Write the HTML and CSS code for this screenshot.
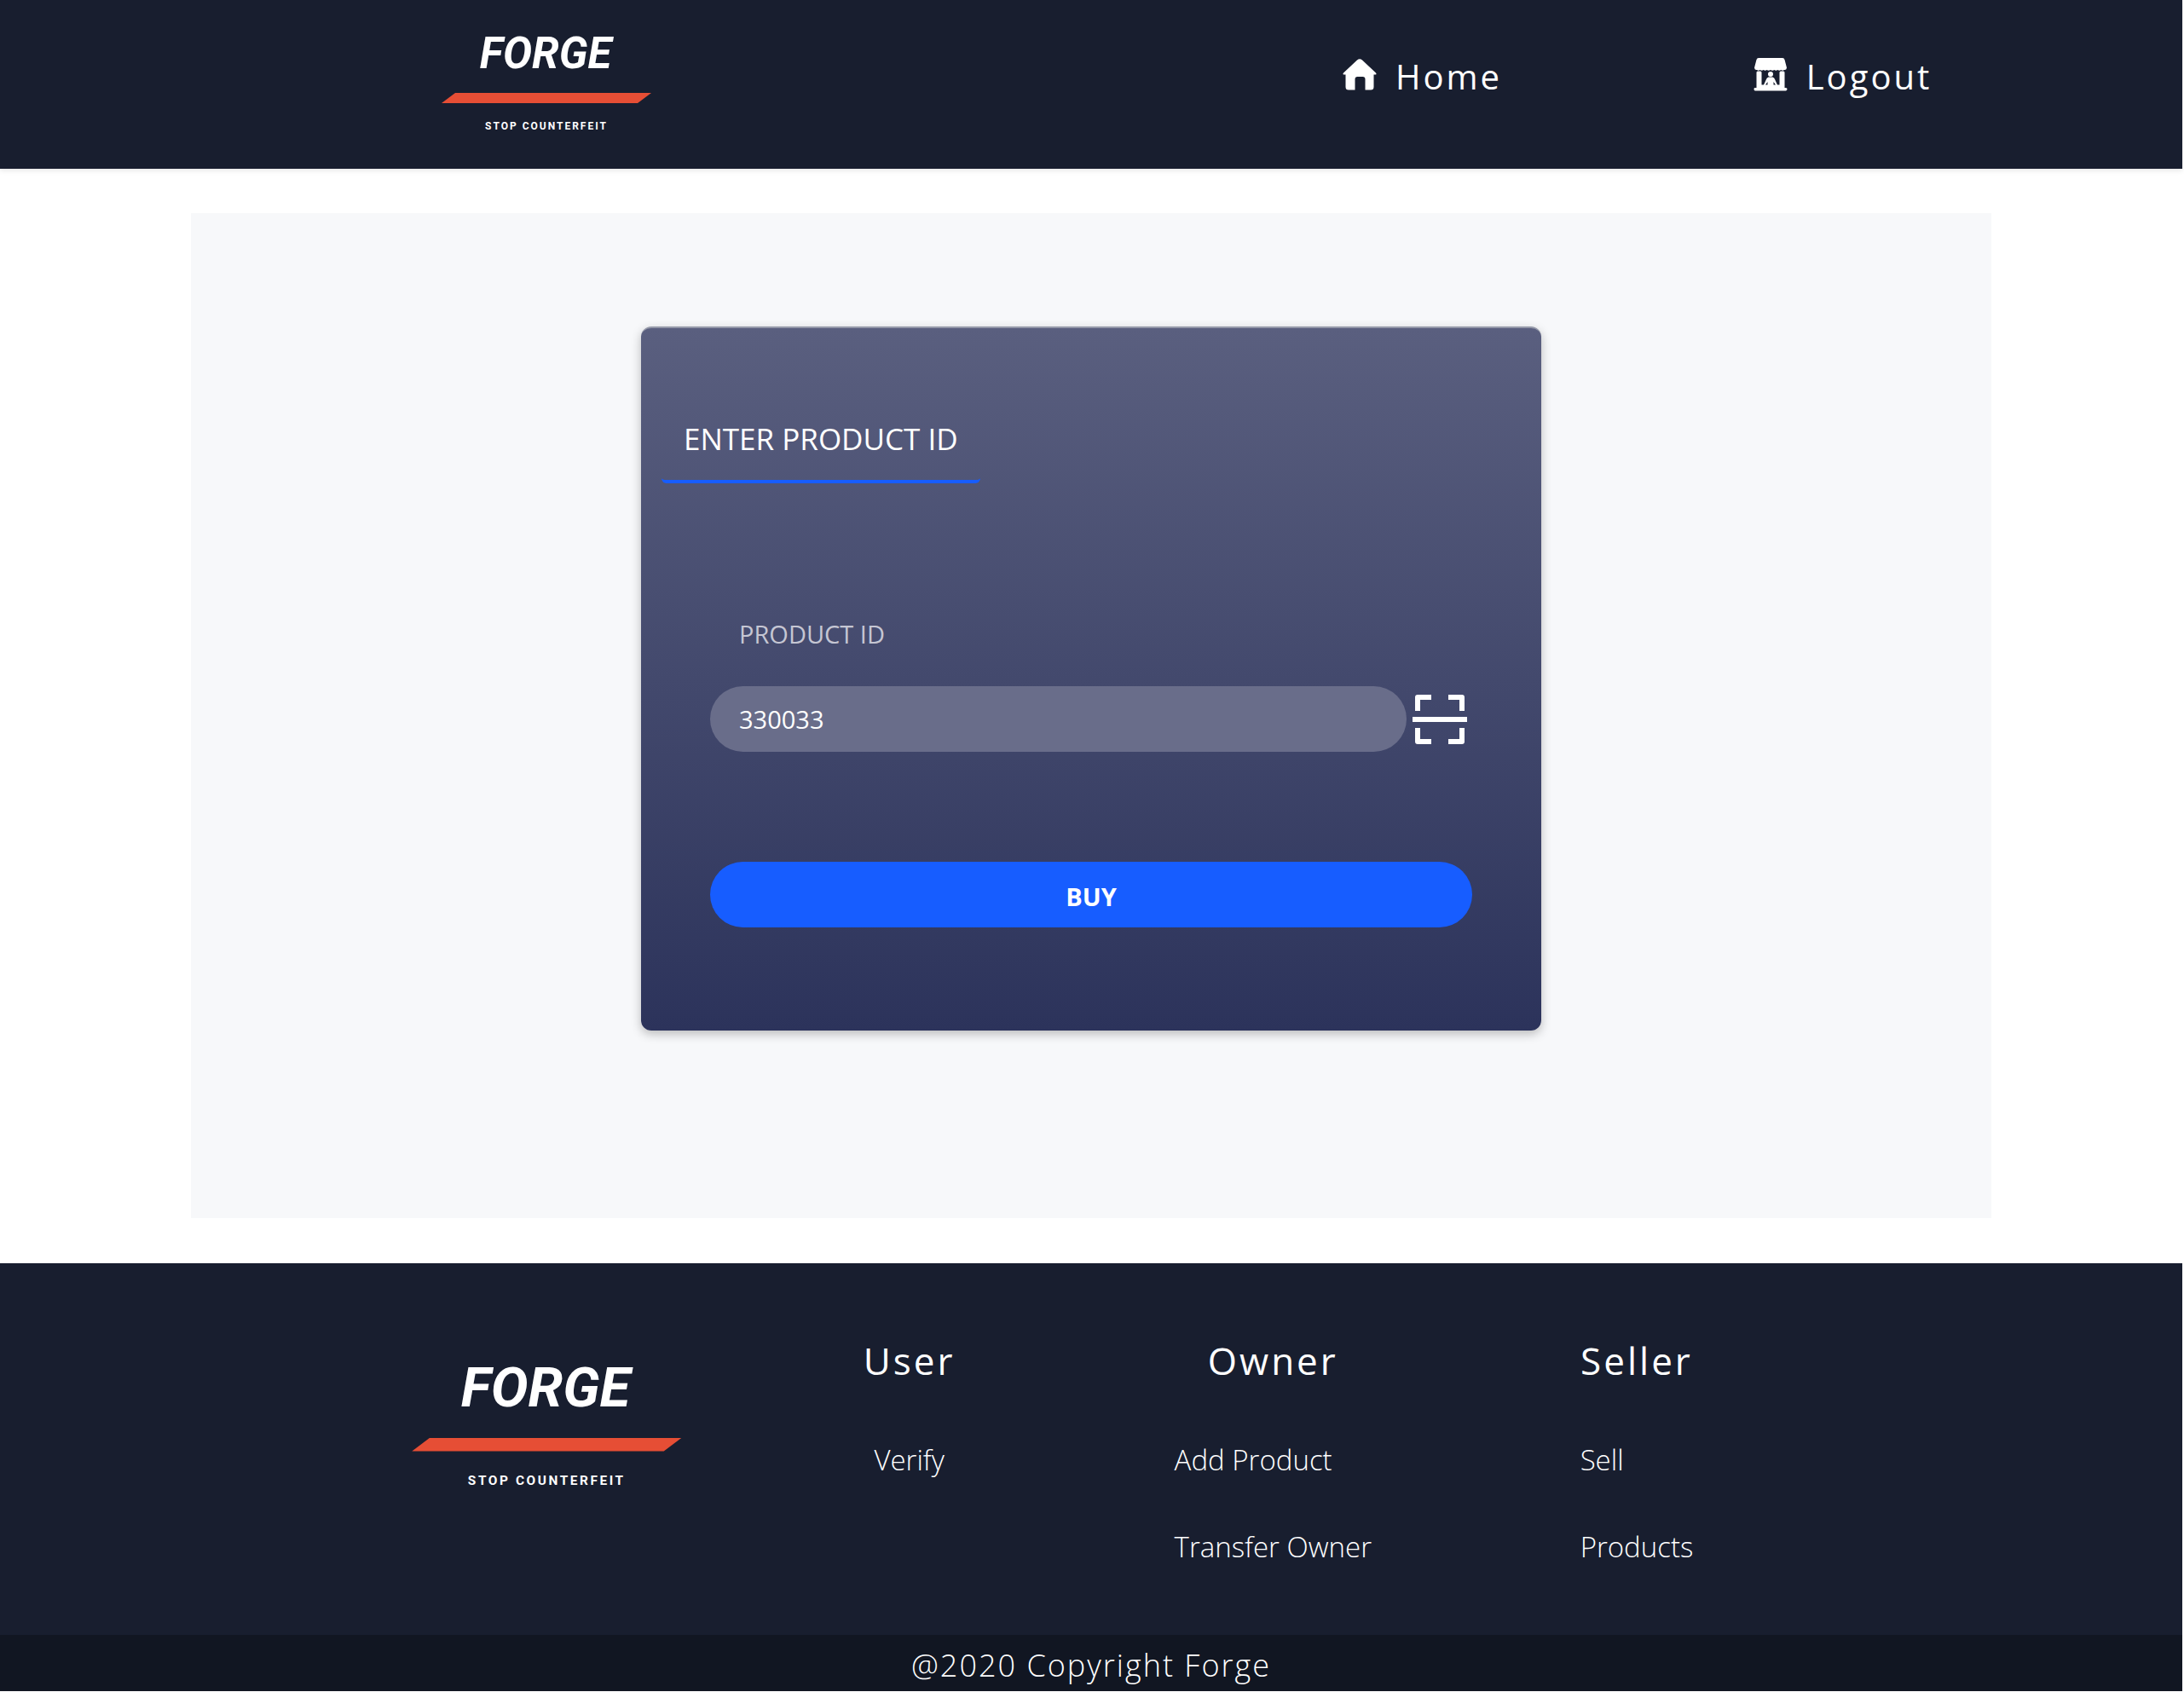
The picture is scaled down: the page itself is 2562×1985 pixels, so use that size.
FILE: index.html
```html
<!DOCTYPE html>
<html lang="en">
<head>
<meta charset="utf-8">
<meta name="viewport" content="width=device-width, initial-scale=1">
<title>Forge</title>
<link rel="stylesheet" href="styles.css">
</head>
<body>
<div class="page">
  <header class="site-header">
    <a class="logo" href="#" aria-label="Forge">
      <svg viewBox="0 0 246 114" role="img" aria-label="Forge, stop counterfeit">
        <text class="logo-name" x="123" y="38">FORGE</text>
        <path class="logo-bar" d="M17 67H247L231 79H1Z"/>
        <text class="logo-tag" x="124" y="110">STOP COUNTERFEIT</text>
      </svg>
    </a>
    <nav class="site-nav" aria-label="Main">
      <a class="nav-link" href="#">
        <svg class="nav-icon" viewBox="0 0 40 40" aria-hidden="true">
          <path d="M17 2.500Q20 0 23 2.500L39 17.500Q40.500 19.500 38 19.500H36.500V34Q36.500 37.500 33 37.500H26.500V25Q26.500 22 23.500 22H17.500Q14.500 22 14.500 25V37.500H7Q3.500 37.500 3.500 34V19.500H2Q-.5 19.500 1 17.500Z"/>
        </svg>
        <span>Home</span>
      </a>
      <a class="nav-link" href="#">
        <svg class="nav-icon" viewBox="0 0 40 40" aria-hidden="true">
          <path d="M6 0H34Q36 0 36.500 2L39 11.500Q38.500 14.500 36 14Q34 15.500 32.500 14Q30 15.500 28.500 14Q26 15.500 24.500 14Q22 15.500 20 14Q18 15.500 15.500 14Q14 15.500 11.500 14Q10 15.500 7.500 14Q6 15.500 4 14Q1.500 14.500 1 11.500L3.500 2Q4 0 6 0ZM5 15.500H8Q9.500 15.500 9.500 17V31.500H12L15 25Q15.500 23 17.500 22.500H22.500Q24.500 23 25 25L28 31.500H30.500V17Q30.500 15.500 32 15.500H35Q36.500 15.500 36.500 17V35H38Q39.500 35 39.500 36.500T38 38.500H2Q.5 38.500 .5 36.500T2 35H3.500V17Q3.500 15.500 5 15.500ZM14 31.500H16.500V28ZM23.500 31.500H26L23.500 28Z" fill-rule="evenodd"/>
          <circle cx="20" cy="19" r="3"/>
        </svg>
        <span>Logout</span>
      </a>
    </nav>
  </header>

  <main class="content">
    <form class="card">
      <h1 class="card-title">ENTER PRODUCT ID</h1>
      <div class="card-body">
        <label class="field-label" for="product-id">PRODUCT ID</label>
        <div class="field-row">
          <input class="field-input" id="product-id" type="text" value="330033">
          <button class="scan-button" type="button" aria-label="Scan code">
            <svg viewBox="0 0 66 60" aria-hidden="true">
              <path d="M4 20V4Q4 1 7 1H23V7H10V20ZM43 1H59Q62 1 62 4V20H56V7H43ZM1 27H65V33H1ZM4 40H10V53H23V59H7Q4 59 4 56ZM56 40H62V56Q62 59 59 59H43V53H56Z"/>
            </svg>
          </button>
        </div>
        <button class="buy-button" type="submit">BUY</button>
      </div>
    </form>
  </main>

  <footer class="site-footer">
    <div class="footer-main">
      <a class="logo logo-large" href="#" aria-label="Forge">
        <svg viewBox="0 0 246 114" role="img" aria-label="Forge, stop counterfeit">
          <text class="logo-name" x="123" y="38">FORGE</text>
          <path class="logo-bar" d="M17 67H247L231 79H1Z"/>
          <text class="logo-tag" x="124" y="110">STOP COUNTERFEIT</text>
        </svg>
      </a>
      <section class="footer-column">
        <h2>User</h2>
        <ul>
          <li><a href="#">Verify</a></li>
        </ul>
      </section>
      <section class="footer-column">
        <h2>Owner</h2>
        <ul>
          <li><a href="#">Add Product</a></li>
          <li><a href="#">Transfer Owner</a></li>
        </ul>
      </section>
      <section class="footer-column">
        <h2>Seller</h2>
        <ul>
          <li><a href="#">Sell</a></li>
          <li><a href="#">Products</a></li>
        </ul>
      </section>
    </div>
    <p class="copyright">@2020 Copyright Forge</p>
  </footer>
</div>
</body>
</html>
```
FILE: styles.css
```css
* {
  box-sizing: border-box;
}

body {
  margin: 0;
  background: #fff;
  color: #fff;
  font-family: "Open Sans", "Noto Sans", sans-serif;
}

.page {
  padding: 0 2px 1px 0;
}

a {
  color: inherit;
  text-decoration: none;
}

h1,
h2,
p,
ul {
  margin: 0;
  padding: 0;
  font-weight: 400;
}

ul {
  list-style: none;
}

svg {
  display: block;
  overflow: visible;
  fill: currentColor;
}

/* Header */
.site-header {
  display: grid;
  grid-template-columns: 1fr 1fr;
  background: #181e2f;
  box-shadow: 0 2px 6px rgba(0, 0, 0, 0.1);
}

.logo {
  justify-self: center;
  width: 246px;
  margin: 42px 0;
}

.logo svg {
  width: 100%;
}

.logo-name {
  font-family: Roboto, "Open Sans", sans-serif;
  font-size: 51px;
  font-style: italic;
  font-weight: 700;
  text-anchor: middle;
}

.logo-bar {
  fill: #e64e35;
}

.logo-tag {
  font-family: Roboto, "Open Sans", sans-serif;
  font-size: 12px;
  font-weight: 700;
  letter-spacing: 2px;
  text-anchor: middle;
}

.site-nav {
  display: grid;
  grid-template-columns: 1fr 1fr;
  justify-items: center;
  align-items: start;
  padding: 62px 152px 0 142px;
}

.nav-link {
  display: flex;
  gap: 22px;
  font-size: 40px;
  line-height: 56px;
  letter-spacing: 3px;
}

.nav-icon {
  width: 40px;
  height: 40px;
  margin-top: 6px;
}

/* Product form */
.content {
  margin: 52px 224px 53px;
  padding: 133px 0 220px;
  background: #f7f8fa;
}

.card {
  width: 50%;
  margin: 0 auto;
  padding: 96px 24px 121px;
  border-top: 2px solid #9498a8;
  border-radius: 12px;
  background: linear-gradient(#5a5f7f, #2c335b);
  box-shadow: 0 4px 12px rgba(0, 0, 0, 0.25);
}

.card-title {
  width: fit-content;
  padding: 11px 26px 25px;
  border-bottom: 4px solid #175dff;
  border-radius: 6px;
  font-size: 35px;
  line-height: 46px;
}

.card-body {
  padding: 153px 57px 0;
}

.field-label {
  display: block;
  padding-left: 34px;
  color: #c5c6d3;
  font-size: 29px;
  line-height: 48px;
}

.field-row {
  display: flex;
  align-items: center;
  gap: 6px;
  margin-top: 37px;
}

.field-input {
  flex: 1;
  min-width: 0;
  height: 77px;
  padding: 0 34px;
  border: 0;
  border-radius: 39px;
  background: #696d8a;
  color: #fff;
  font: inherit;
  font-size: 29px;
}

.scan-button {
  width: 71px;
  padding: 0;
  border: 0;
  background: none;
  color: #fff;
}

.scan-button svg {
  width: 66px;
}

.buy-button {
  display: block;
  width: 100%;
  height: 77px;
  margin-top: 129px;
  padding: 4px 0 0;
  border: 0;
  border-radius: 39px;
  background: #175dff;
  color: #fff;
  font: inherit;
  font-size: 29px;
  font-weight: 700;
}

/* Footer */
.site-footer {
  background: #181e2f;
}

/* Six equal tracks; the outer two stay empty */
.footer-main {
  display: grid;
  grid-template-columns: repeat(6, 1fr);
  padding: 79px 0 75px;
}

.logo-large {
  grid-column: 2;
  width: 316px;
  margin: 40px 0 0;
}

.footer-column {
  display: flex;
  flex-direction: column;
  align-items: center;
}

.footer-column h2 {
  font-size: 44px;
  line-height: 70px;
  letter-spacing: 3px;
}

.footer-column ul {
  display: grid;
  gap: 46px;
  margin-top: 54px;
}

.footer-column li {
  font-size: 33px;
  font-weight: 300;
  line-height: 56px;
}

.copyright {
  padding-top: 6px;
  background: #111622;
  font-size: 36px;
  font-weight: 300;
  line-height: 60px;
  letter-spacing: 2px;
  text-align: center;
}
```
